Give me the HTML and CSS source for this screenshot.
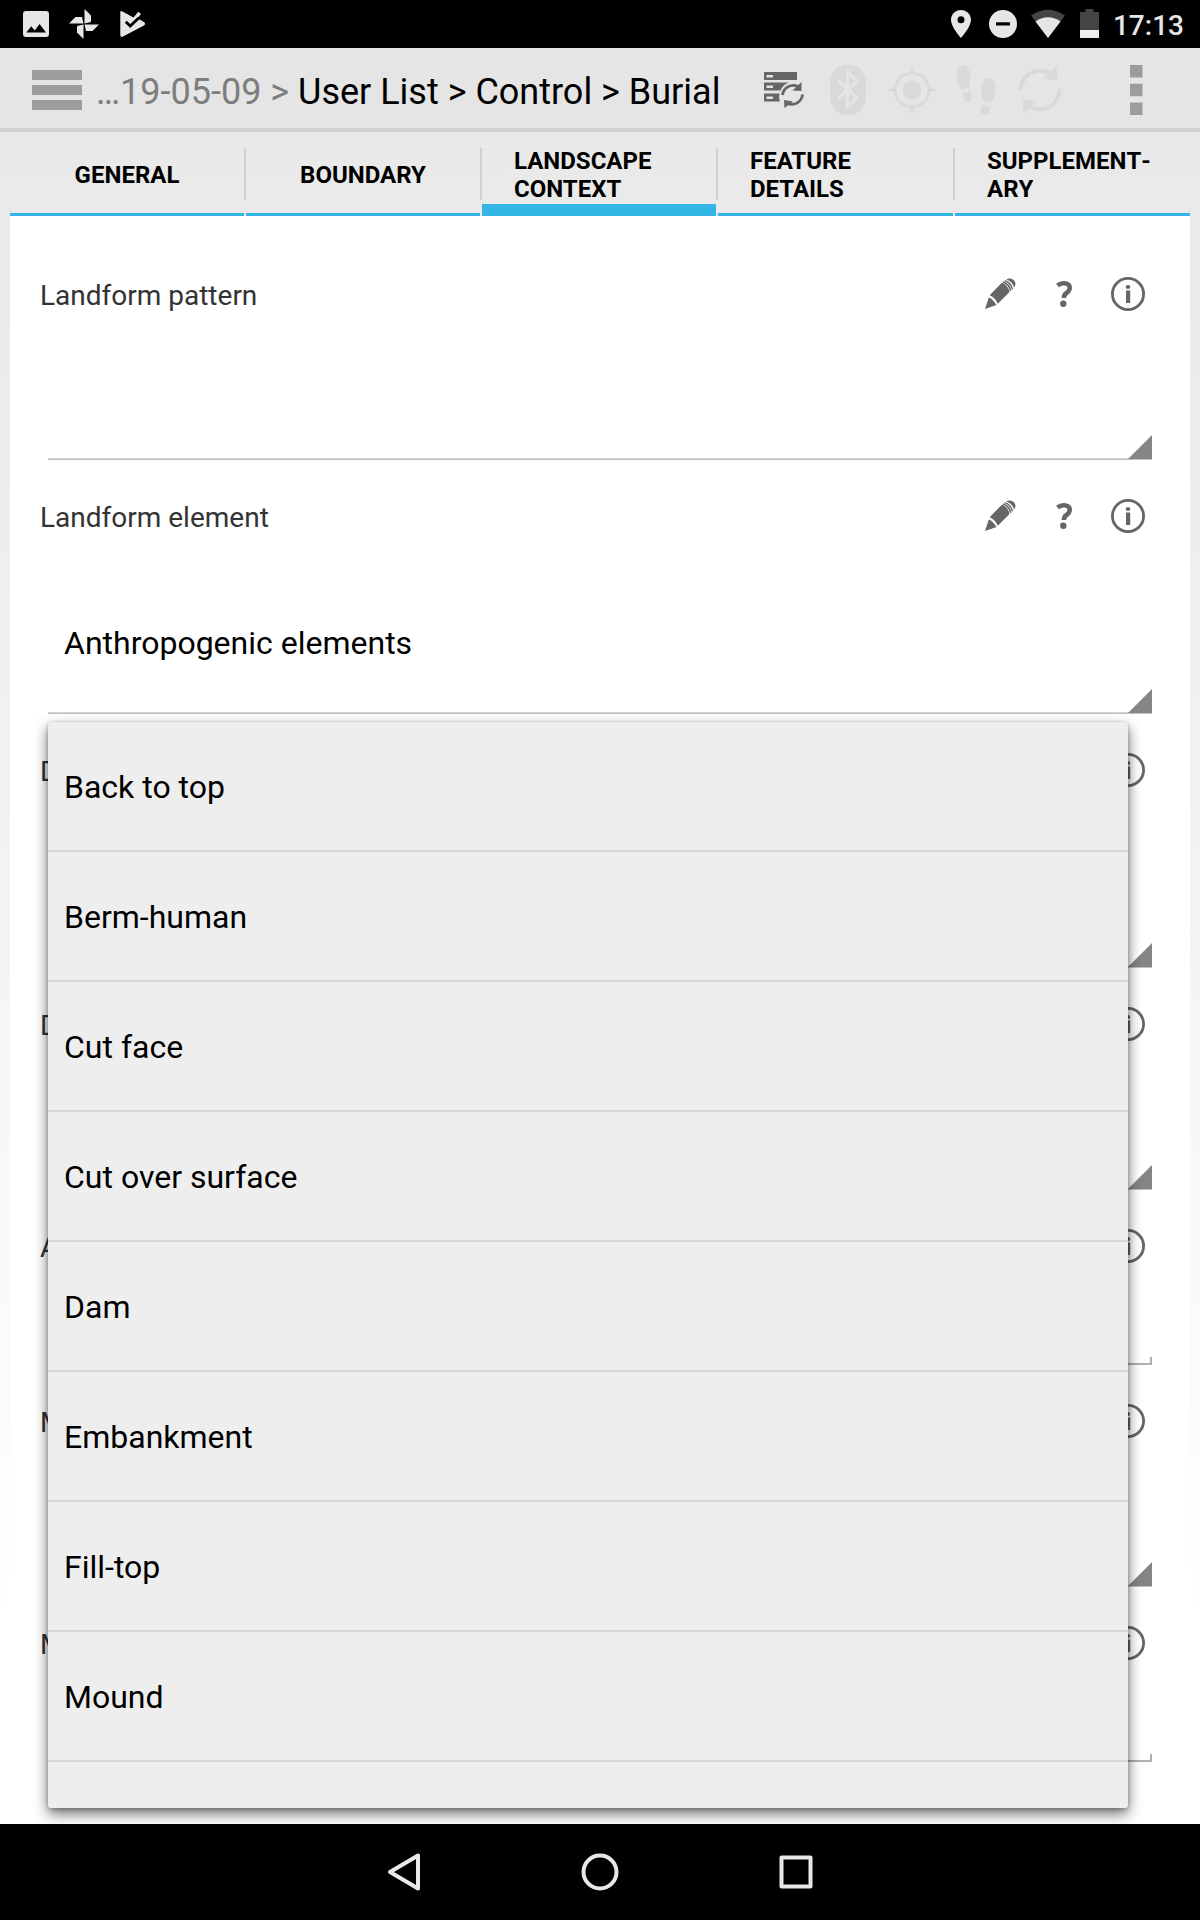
FILE: index.html
```html
<!DOCTYPE html>
<html lang="en">
<head>
<meta charset="utf-8">
<title>Burial – Landscape context</title>
<link rel="stylesheet" href="styles.css">
</head>
<body>
<svg width="0" height="0" class="defs" aria-hidden="true">
  <symbol id="info" viewBox="0 0 64 64">
    <circle cx="32" cy="32" r="15.6" fill="none" stroke="#666" stroke-width="2.8"/>
    <ellipse cx="32" cy="25" rx="2.3" ry="2" fill="#666"/>
    <rect x="30" y="28.5" width="4.2" height="12.5" fill="#666"/>
  </symbol>
  <symbol id="pencil" viewBox="0 0 64 64">
    <g fill="#666">
      <path d="M17 47 20.800 35.500Q24.500 36.500 28.500 43Z"/>
      <path d="M21.700 33.200 33.800 20.800Q40 22.500 41.500 30L29.800 41.800Q27.500 36 21.700 33.200Z"/>
      <path d="M38.300 17.400 40.300 16.600Q43.500 15.800 46 18.200 48 20.500 47.200 23.500L46 25.400Q44.500 19.500 38.300 17.400Z"/>
    </g>
    <g fill="none" stroke="#666" stroke-width="1.5">
      <path d="M34.900 20Q41.300 21.800 42.700 28.900"/>
      <path d="M36.700 18.600Q43 20.500 44.400 27.300"/>
    </g>
  </symbol>
  <symbol id="help" viewBox="0 0 64 64">
    <path d="M25.500 23.500Q28.500 21 32.500 21.300 37.900 21.800 37.700 26 37.500 29 34.500 31 32 32.600 31.900 36" fill="none" stroke="#666" stroke-width="4.600"/>
    <circle cx="31.300" cy="41.700" r="3.200" fill="#666"/>
  </symbol>
</svg>

<div class="screen">
  <div class="statusbar">
    <div class="notifications">
      <svg width="48" height="48" viewBox="0 0 48 48"><path fill="#e6e6e6" fill-rule="evenodd" d="M14 11H34Q37 11 37 14V34Q37 37 34 37H14Q11 37 11 34V14Q11 11 14 11ZM14.300 32.500H34L27.600 24 22.700 30.400 19.200 26.200Z"/></svg>
      <svg width="48" height="48" viewBox="0 0 48 48"><g fill="#e6e6e6"><path d="M24.500 9 31 15.500V22L24.500 23.500Z"/><path d="M24.500 9 31 15.500V22L24.500 23.500Z" transform="rotate(90 24 24)"/><path d="M24.500 9 31 15.500V22L24.500 23.500Z" transform="rotate(180 24 24)"/><path d="M24.500 9 31 15.500V22L24.500 23.500Z" transform="rotate(270 24 24)"/></g></svg>
      <svg width="48" height="48" viewBox="0 0 48 48"><path fill="#e6e6e6" d="M12.300 12.500Q12.300 10.500 14 11.300L25.500 17.500 30.300 11.700 33 14 29.500 18.200 36.300 22.300Q38 24 36 25.500L14.500 36.700Q12.300 37.300 12.300 35.500Z"/><path d="M17.800 21.800 22.200 26 31 17.800" fill="none" stroke="#000" stroke-width="2.800"/></svg>
    </div>
    <div class="system">
      <svg width="20" height="48" viewBox="0 0 20 48"><path fill="#e6e6e6" fill-rule="evenodd" d="M10 10C4.500 10 0 14.300 0 19.800 0 27 10 38 10 38S20 27 20 19.800C20 14.300 15.500 10 10 10ZM10 16.200A3.500 3.500 0 1 1 10 23.200 3.500 3.500 0 1 1 10 16.200Z"/></svg>
      <svg width="28" height="48" viewBox="0 0 28 48"><circle cx="14" cy="24" r="14" fill="#e6e6e6"/><rect x="7" y="22.300" width="14" height="3.200"/></svg>
      <svg width="34" height="48" viewBox="0 0 34 48"><path fill="#444" d="M0 15.500Q17 4 34 15.500L17 38Z"/><path fill="#e6e6e6" d="M4.500 21.400Q17 13 29.500 21.400L17 38Z"/></svg>
      <svg width="19" height="48" viewBox="0 0 19 48"><path fill="#444" d="M5.500 9H13.500V12H19V38H0V12H5.500Z"/><rect y="30" width="19" height="8" fill="#eee"/></svg>
      <span class="clock">17:13</span>
    </div>
  </div>

  <div class="actionbar">
    <svg class="menu" width="50" height="40" viewBox="0 0 50 40"><path fill="#9c9c9c" d="M0 0H50V10H0ZM0 15H50V25H0ZM0 30H50V40H0Z"/></svg>
    <div class="title"><span class="crumb">…19-05-09 &gt; </span>User List &gt; Control &gt; Burial</div>
    <div class="actions">
      <svg width="64" height="80" viewBox="0 0 64 80">
        <g fill="#666"><path fill-rule="evenodd" d="M12 24H45V32H12ZM14.500 27V29.500H21V27Z"/><path fill-rule="evenodd" d="M12 34.500H37Q31 36.500 28.500 42.500H12ZM14.500 37.500V40H21V37.500Z"/><path fill-rule="evenodd" d="M12 45.500H27.500Q26.500 50 28 53.500H12ZM14.500 48.500V51H21V48.500Z"/></g>
        <g fill="none" stroke="#666" stroke-width="2.800"><path d="M30.500 47A10.800 10.800 0 0 1 46 38.500"/><path d="M50.500 46.500A10.800 10.800 0 0 1 35.500 55.500"/></g>
        <path fill="#666" d="M49.500 34V43L40.500 42.500ZM32 52 41 53.500 32.500 60Z"/>
      </svg>
      <svg width="64" height="80" viewBox="0 0 64 80"><path fill="#d9d9d9" d="M32 17C44 17 50 24 50 34V49C50 60 43 67 32 67S14 60 14 49V34C14 24 20 17 32 17Z"/><path d="M22 32.500 41 50 31.500 59V24L41 33 22 50.500" fill="none" stroke="#e5e5e5" stroke-width="3.200"/></svg>
      <svg width="64" height="80" viewBox="0 0 64 80"><circle cx="32" cy="42" r="9.500" fill="#d9d9d9"/><g fill="none" stroke="#d9d9d9" stroke-width="2.600"><circle cx="32" cy="42" r="17"/><path d="M32 18.500V25M32 59V65.500M8.500 42H15M49 42H55.500"/></g></svg>
      <svg width="64" height="80" viewBox="0 0 64 80"><g fill="#d9d9d9"><path d="M19 17C12 18 12 28 14 34 15.500 38 16 41 18 41.500L25 39.500C26 36 27 31 26 26 25 20 22.500 17 19 17Z"/><path d="M18.500 45Q22 44.800 26 43 29 49 27.500 52 25 56 21.500 53.500 19.500 50 18.500 45Z"/><path d="M45.500 30C41 29.800 38 34 37.500 40 37 46 38.500 49 39.500 53L46.500 54.500C48.500 53 50 49 51 45 53 37 51 31 45.500 30Z"/><path d="M38 56.500 46 58.500Q46 64 44 66 40 68.500 37 65.500 35.500 62.500 38 56.500Z"/></g></svg>
      <svg width="64" height="80" viewBox="0 0 64 80"><g fill="none" stroke="#d9d9d9" stroke-width="4"><path d="M12.500 43A19.700 19.700 0 0 1 45 27.500"/><path d="M51.500 41A19.700 19.700 0 0 1 19 56.500"/></g><path fill="#d9d9d9" d="M48.500 18 49.500 32.500 35 30.500ZM15.500 66.500 15 51.500 29 53.500Z"/></svg>
      <svg width="128" height="80" viewBox="0 0 128 80"><path fill="#9c9c9c" d="M58 17H70.500V29.500H58ZM58 35.800H70.500V48.300H58ZM58 54.500H70.500V67H58Z"/></svg>
    </div>
  </div>

  <div class="content">
    <div class="tabs">
      <div class="tab"><span>GENERAL</span></div>
      <div class="tab"><span>BOUNDARY</span></div>
      <div class="tab active"><span>LANDSCAPE<br>CONTEXT</span></div>
      <div class="tab"><span>FEATURE<br>DETAILS</span></div>
      <div class="tab hyphenated"><span>SUPPLEMENT-<br>ARY</span></div>
    </div>
    <div class="form">
      <div class="field">
        <div class="head"><span class="label">Landform pattern</span><svg class="icon"><use href="#pencil"/></svg><svg class="icon"><use href="#help"/></svg><svg class="icon"><use href="#info"/></svg></div>
        <div class="spinner"></div>
      </div>
      <div class="field">
        <div class="head"><span class="label">Landform element</span><svg class="icon"><use href="#pencil"/></svg><svg class="icon"><use href="#help"/></svg><svg class="icon"><use href="#info"/></svg></div>
        <div class="spinner tall">Anthropogenic elements</div>
      </div>
      <div class="field">
        <div class="head"><span class="label">D</span><svg class="icon"><use href="#info"/></svg></div>
        <div class="spinner tall"></div>
      </div>
      <div class="field">
        <div class="head"><span class="label">D</span><svg class="icon"><use href="#info"/></svg></div>
        <div class="spinner"></div>
      </div>
      <div class="field">
        <div class="head"><span class="label">A</span><svg class="icon"><use href="#info"/></svg></div>
        <div class="input"></div>
      </div>
      <div class="field">
        <div class="head"><span class="label">M</span><svg class="icon"><use href="#info"/></svg></div>
        <div class="spinner"></div>
      </div>
      <div class="field">
        <div class="head"><span class="label">M</span><svg class="icon"><use href="#info"/></svg></div>
        <div class="input"></div>
      </div>
    </div>
    <div class="dropdown">
      <div class="option">Back to top</div>
      <div class="option">Berm-human</div>
      <div class="option">Cut face</div>
      <div class="option">Cut over surface</div>
      <div class="option">Dam</div>
      <div class="option">Embankment</div>
      <div class="option">Fill-top</div>
      <div class="option">Mound</div>
    </div>
  </div>

  <div class="navbar">
    <svg width="196" height="96" viewBox="0 0 196 96"><path d="M112 31.500V64.500L84 48Z" fill="none" stroke="#e8e8e8" stroke-width="4" stroke-linejoin="round"/></svg>
    <svg width="196" height="96" viewBox="0 0 196 96"><circle cx="98" cy="48" r="16.500" fill="none" stroke="#e8e8e8" stroke-width="4"/></svg>
    <svg width="196" height="96" viewBox="0 0 196 96"><rect x="83.500" y="33.500" width="29" height="29" fill="none" stroke="#e8e8e8" stroke-width="4" stroke-linejoin="round"/></svg>
  </div>
</div>
</body>
</html>
```
FILE: styles.css
```css
* { box-sizing: border-box; }
body {
  margin: 0;
  font-family: Roboto, "Liberation Sans", sans-serif;
  color: #000;
}
svg { display: block; flex: none; }
.defs { position: absolute; }
.screen {
  width: 1200px;
  height: 1920px;
  display: flex;
  flex-direction: column;
  overflow: hidden;
}

.statusbar {
  height: 48px;
  flex: none;
  background: #000;
  display: flex;
  justify-content: space-between;
  padding: 0 16px 0 12px;
}
.notifications { display: flex; }
.system { display: flex; align-items: center; }
.system svg:nth-child(2) { margin-left: 18px; }
.system svg:nth-child(3) { margin-left: 14px; }
.system svg:nth-child(4) { margin-left: 15px; }
.clock {
  margin-left: 14px;
  font-size: 28px;
  font-weight: 500;
  line-height: 48px;
  color: #e6e6e6;
  padding-top: 3px;
}

.actionbar {
  height: 84px;
  flex: none;
  background: #e5e5e5;
  border-bottom: 4px solid #d2d2d2;
  display: flex;
  align-items: center;
}
.menu { margin: 4px 14px 0 32px; }
.title {
  flex: 1;
  font-size: 36px;
  line-height: 80px;
  padding-top: 8px;
  white-space: pre;
}
.crumb { color: #7d7d7d; }
.actions { display: flex; }

.content {
  flex: 1;
  position: relative;
  padding: 0 10px;
  background: linear-gradient(#e9e9e9, #ededed 20%, #fff 88%);
  display: flex;
  flex-direction: column;
  overflow: hidden;
}
.tabs {
  flex: none;
  height: 84px;
  display: grid;
  grid-template-columns: 234px 234px 234px 235px 235px;
  gap: 2px;
}
.tab {
  position: relative;
  display: flex;
  align-items: center;
  justify-content: center;
  padding: 5px 32px 0;
  border-bottom: 3px solid #33b5e5;
  font-size: 24px;
  line-height: 28px;
  font-weight: 700;
}
.tab:nth-child(n+3) { justify-content: flex-start; }
.tab.active { border-bottom-width: 12px; padding-top: 14px; }
.tab.hyphenated { font-kerning: none; }
.tab + .tab::before {
  content: "";
  position: absolute;
  left: -2px;
  top: 16px;
  width: 2px;
  height: 52px;
  background: #d0d0d0;
}

.form {
  flex: 1;
  background: #fff;
  padding: 46px 30px 0;
  display: flex;
  flex-direction: column;
  gap: 24px;
}
.head {
  display: flex;
  align-items: center;
  height: 64px;
}
.label { flex: 1; font-size: 28px; color: #333; padding-top: 2px; }
.icon { width: 64px; height: 64px; }
.spinner {
  display: flex;
  justify-content: space-between;
  align-items: flex-end;
  height: 134px;
  margin: 0 8px;
  padding: 0 0 1px 16px;
  font-size: 32px;
  line-height: 139px;
  background: linear-gradient(#ddd, #b8b8b8) bottom / 100% 2px no-repeat;
}
.spinner::after {
  content: "";
  width: 24px;
  height: 24px;
  margin-left: auto;
  background: #858585;
  clip-path: polygon(100% 0, 100% 100%, 0 100%);
}
.spinner.tall { height: 166px; }
.input {
  height: 87px;
  margin: 0 8px;
  background:
    linear-gradient(#b0b0b0, #b0b0b0) right bottom / 2px 8px no-repeat,
    linear-gradient(#b0b0b0, #b0b0b0) bottom / 100% 2px no-repeat;
}

.dropdown {
  position: absolute;
  left: 48px;
  top: 590px;
  width: 1080px;
  height: 1086px;
  background: #eee;
  border-radius: 3px;
  box-shadow: 0 6px 14px rgba(0, 0, 0, .55), 0 1px 4px rgba(0, 0, 0, .25);
  overflow: hidden;
}
.option {
  height: 130px;
  padding: 1px 16px 0;
  border-bottom: 2px solid #d6d6d6;
  font-size: 32px;
  line-height: 128px;
}

.navbar {
  height: 96px;
  flex: none;
  background: #000;
  display: flex;
  justify-content: center;
}
```
